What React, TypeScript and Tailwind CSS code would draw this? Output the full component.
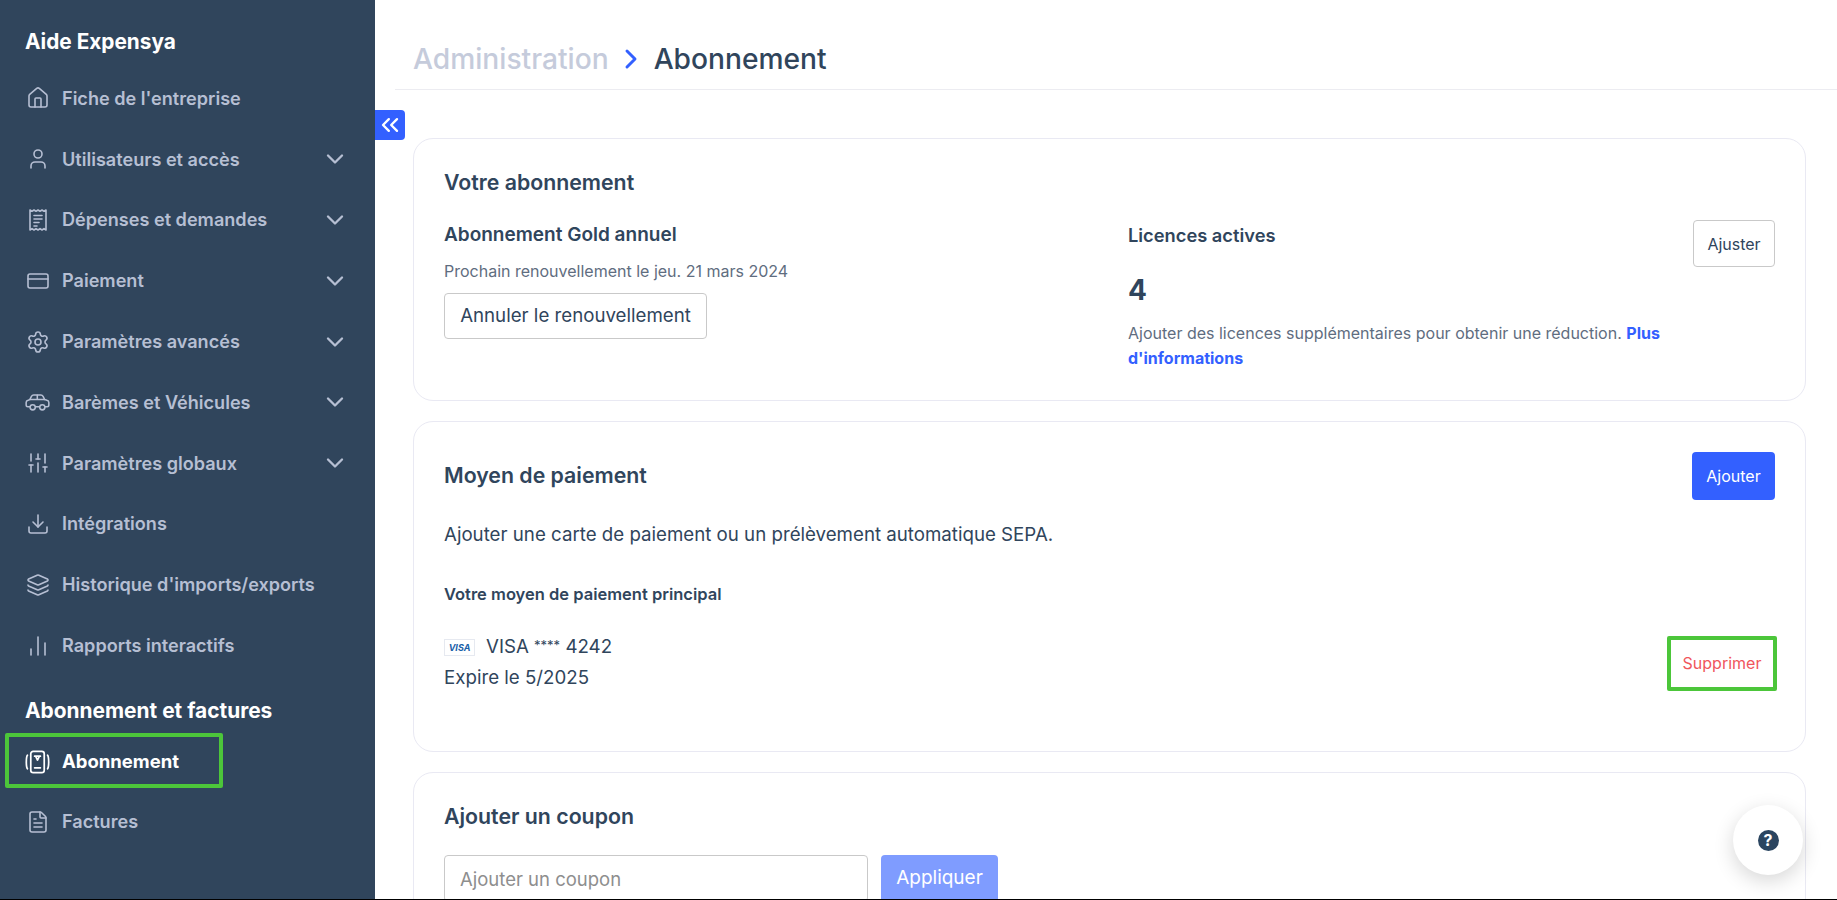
import React from 'react';
import {
  ChartNoAxesColumn,
  ChevronDown,
  ChevronRight,
  ChevronsLeft,
  CreditCard,
  Download,
  FileText,
  House,
  Layers,
  Settings,
  SlidersVertical,
  User,
} from 'lucide-react';

function ReceiptIcon() {
  return (
    <svg viewBox="0 0 24 24" className="w-6 h-6" fill="none" stroke="currentColor" strokeWidth="1.6" strokeLinejoin="round">
      <path d="M4 2v20l2-1.400 2 1.400 2-1.400 2 1.400 2-1.400 2 1.400 2-1.400 2 1.400V2l-2 1.200L16 2l-2 1.200L12 2l-2 1.200L8 2 6 3.200z" />
      <path d="M8 7.500h8M8 11h8M8 14.500h5M8 18h3" strokeLinecap="round" />
    </svg>
  );
}

function CarIcon() {
  return (
    <svg viewBox="0 0 26 24" className="w-[26px] h-6" fill="none" stroke="currentColor" strokeWidth="1.6" strokeLinecap="round" strokeLinejoin="round">
      <path d="M5 17H3c-1 0-1.800-.800-1.800-1.800v-2.700c0-1.200.800-2 2-2.300L5 9.500l1.700-3.300C7.200 5.300 8 4.800 9 4.800h7.500c1 0 1.800.500 2.300 1.400l1.700 3.300 2.300.7c1.200.300 2 1.100 2 2.300v2.700c0 1-.800 1.800-1.800 1.800H21" />
      <path d="M5 9.500h15.500M12.800 5v4.500M11 17h4" />
      <circle cx="8" cy="17.500" r="2.700" />
      <circle cx="18" cy="17.500" r="2.700" />
    </svg>
  );
}

function SubscriptionIcon() {
  return (
    <svg viewBox="0 0 26 24" className="w-[26px] h-6" fill="none" stroke="currentColor" strokeWidth="1.8" strokeLinecap="round" strokeLinejoin="round">
      <rect x="6" y="1" width="14" height="22" rx="2.500" />
      <path d="M10 6h6M11 6l2 4 2-4M10 18h6" />
      <path d="M2.500 5C1 7 1 17 2.500 19M23.500 5c1.500 2 1.500 12 0 14" />
    </svg>
  );
}

type NavItem = { label: string; icon: React.ReactNode; chevron?: boolean };

const ICON = 'w-6 h-6';

const NAV_ITEMS: NavItem[] = [
  { label: "Fiche de l'entreprise", icon: <House className={ICON} strokeWidth={1.6} /> },
  { label: 'Utilisateurs et accès', icon: <User className={ICON} strokeWidth={1.6} />, chevron: true },
  { label: 'Dépenses et demandes', icon: <ReceiptIcon />, chevron: true },
  { label: 'Paiement', icon: <CreditCard className={ICON} strokeWidth={1.6} />, chevron: true },
  { label: 'Paramètres avancés', icon: <Settings className={ICON} strokeWidth={1.6} />, chevron: true },
  { label: 'Barèmes et Véhicules', icon: <CarIcon />, chevron: true },
  { label: 'Paramètres globaux', icon: <SlidersVertical className={ICON} strokeWidth={1.6} />, chevron: true },
  { label: 'Intégrations', icon: <Download className={ICON} strokeWidth={1.6} /> },
  { label: "Historique d'imports/exports", icon: <Layers className={ICON} strokeWidth={1.6} /> },
  { label: 'Rapports interactifs', icon: <ChartNoAxesColumn className={ICON} strokeWidth={1.6} /> },
];

function NavRow({ item }: { item: NavItem }) {
  return (
    <div className="flex items-center h-[60.8px] pl-[25px] pr-[26px] text-[#b6bfd3]">
      <span className="w-[25px] flex justify-center shrink-0">{item.icon}</span>
      <span className="ml-3 text-[18.100px] font-semibold flex-1">{item.label}</span>
      {item.chevron && <ChevronDown className="w-[28px] h-[28px]" strokeWidth={2} />}
    </div>
  );
}

function Sidebar() {
  return (
    <aside className="w-[375px] shrink-0 bg-[#30455c] pt-[28px]">
      <h2 className="pl-[25px] text-[20.800px] leading-7 font-bold text-white">Aide Expensya</h2>
      <nav className="mt-[12px]">
        {NAV_ITEMS.map((item) => (
          <NavRow key={item.label} item={item} />
        ))}
      </nav>
      <h3 className="pl-[25px] mt-[21px] text-[20.900px] leading-7 font-bold text-white">Abonnement et factures</h3>
      <div className="relative flex items-center h-[52px] mt-[11px] pl-[25px] text-white">
        <span className="w-[25px] flex justify-center shrink-0"><SubscriptionIcon /></span>
        <span className="ml-3 text-[18.500px] font-bold">Abonnement</span>
        <div className="absolute left-[5px] top-[-3px] w-[218px] h-[55px] border-[4px] border-[#4cc63a] rounded-[2px]" />
      </div>
      <div className="mt-[8px] h-[52px] flex items-center pl-[25px] text-[#b6bfd3]">
        <span className="w-[25px] flex justify-center shrink-0"><FileText className={ICON} strokeWidth={1.6} /></span>
        <span className="ml-3 text-[18.100px] font-semibold">Factures</span>
      </div>
    </aside>
  );
}

function OutlineButton({ children, className }: { children: React.ReactNode; className: string }) {
  return (
    <button type="button" className={`bg-white border border-[#c9c9c9] rounded text-[#30455c] ${className}`}>
      {children}
    </button>
  );
}

export default function App() {
  return (
    <div className="h-[900px] flex flex-col overflow-hidden bg-white text-[#30455c] font-['Inter',sans-serif]">
      <div className="flex h-[899px] overflow-hidden">
        <Sidebar />
        <main className="relative flex-1 min-w-0 pl-[20px]">
          {/* Collapse handle */}
          <button type="button" className="absolute left-0 top-[110px] w-[30px] h-[30px] bg-[#3360ff] rounded-r flex items-center justify-center text-white">
            <ChevronsLeft className="w-7 h-7" strokeWidth={2} />
          </button>

          <header className="h-[90px] border-b border-[#ececf1] flex items-end pl-[18px] pb-[11px] text-[28.200px] leading-[38px] font-medium">
            <span className="text-[#c5cbdb]">Administration</span>
            <ChevronRight className="w-8 h-8 ml-[6px] mr-[7px] mb-[3px] text-[#3360ff]" strokeWidth={2.2} />
            <span>Abonnement</span>
          </header>

          <div className="pl-[18px] pr-[31px] pt-[48px] flex flex-col gap-[20px]">
            <section className="h-[263px] border border-[#e9e9f3] rounded-[20px] pl-[30px] pr-[30px] pt-[29px]">
              <h3 className="text-[21.300px] leading-7 font-semibold">Votre abonnement</h3>
              <div className="flex mt-[27px]">
                <div className="w-[684px]">
                  <p className="text-[19px] leading-[24px] font-semibold">Abonnement Gold annuel</p>
                  <p className="mt-[12px] text-[16px] leading-[24px] text-[#5f6d80]">Prochain renouvellement le jeu. 21 mars 2024</p>
                  <OutlineButton className="mt-[10px] w-[263px] h-[46px] text-[18.700px]">Annuler le renouvellement</OutlineButton>
                </div>
                <div className="flex-1 flex justify-between items-start">
                  <div className="w-[550px]">
                    <p className="text-[18.300px] leading-[24px] font-semibold">Licences actives</p>
                    <p className="mt-[27px] text-[28px] leading-[32px] font-bold">4</p>
                    <p className="mt-[15px] text-[16px] leading-[25px] text-[#5f6d80]">
                      Ajouter des licences supplémentaires pour obtenir une réduction.{' '}
                      <a className="font-bold text-[#3360ff]">Plus d'informations</a>
                    </p>
                  </div>
                  <OutlineButton className="w-[82px] h-[47px] -mt-[3px] text-[16px]">Ajuster</OutlineButton>
                </div>
              </div>
            </section>

            <section className="h-[331px] border border-[#e9e9f3] rounded-[20px] pl-[30px] pr-[30px] pt-[30px]">
              <div className="flex items-center justify-between">
                <h3 className="text-[21.300px] font-semibold">Moyen de paiement</h3>
                <button type="button" className="w-[83px] h-[48px] bg-[#3360ff] rounded text-white text-[16px]">Ajouter</button>
              </div>
              <p className="mt-[23px] text-[18.700px] leading-6">Ajouter une carte de paiement ou un prélèvement automatique SEPA.</p>
              <p className="mt-[35px] text-[16.500px] leading-6 font-semibold">Votre moyen de paiement principal</p>
              <div className="flex items-center justify-between mt-[26px]">
                <div>
                  <div className="flex items-center h-[31px] text-[18.700px]">
                    <span className="w-[31px] h-[17px] mr-[11px] border border-[#e6e9f0] flex items-center justify-center text-[9px] font-bold italic text-[#1a5fa8]">VISA</span>
                    <span>VISA <span className="text-[13px] align-[3px]">****</span> 4242</span>
                  </div>
                  <p className="h-[31px] flex items-center text-[18.700px]">Expire le 5/2025</p>
                </div>
                <div className="w-[110px] h-[55px] border-[4px] border-[#4cc63a] rounded-[2px] flex items-center justify-center text-[16px] text-[#f0565c] -mr-[2px]">
                  Supprimer
                </div>
              </div>
            </section>

            <section className="h-[200px] border border-[#e9e9f3] rounded-[20px] pl-[30px] pr-[30px] pt-[29px]">
              <h3 className="text-[21.300px] leading-7 font-semibold">Ajouter un coupon</h3>
              <div className="flex mt-[25px]">
                <input
                  readOnly
                  placeholder="Ajouter un coupon"
                  className="w-[424px] h-[47px] border border-[#c9c9c9] rounded px-[15px] text-[18.500px] placeholder-[#8e8e8e] outline-none"
                />
                <button type="button" className="ml-[13px] w-[117px] h-[47px] bg-[#7f9cff] rounded text-white text-[19px]">Appliquer</button>
              </div>
            </section>
          </div>

          {/* Help bubble */}
          <button type="button" className="absolute left-[1358px] top-[805px] w-[70px] h-[70px] rounded-full bg-white shadow-[0_6px_20px_rgba(0,0,0,0.16)] flex items-center justify-center">
            <span className="w-[21px] h-[21px] shrink-0 rounded-full bg-[#2b4560] text-white text-[16px] leading-[21px] font-bold text-center">?</span>
          </button>
        </main>
      </div>
      <div className="h-px bg-black" />
    </div>
  );
}
